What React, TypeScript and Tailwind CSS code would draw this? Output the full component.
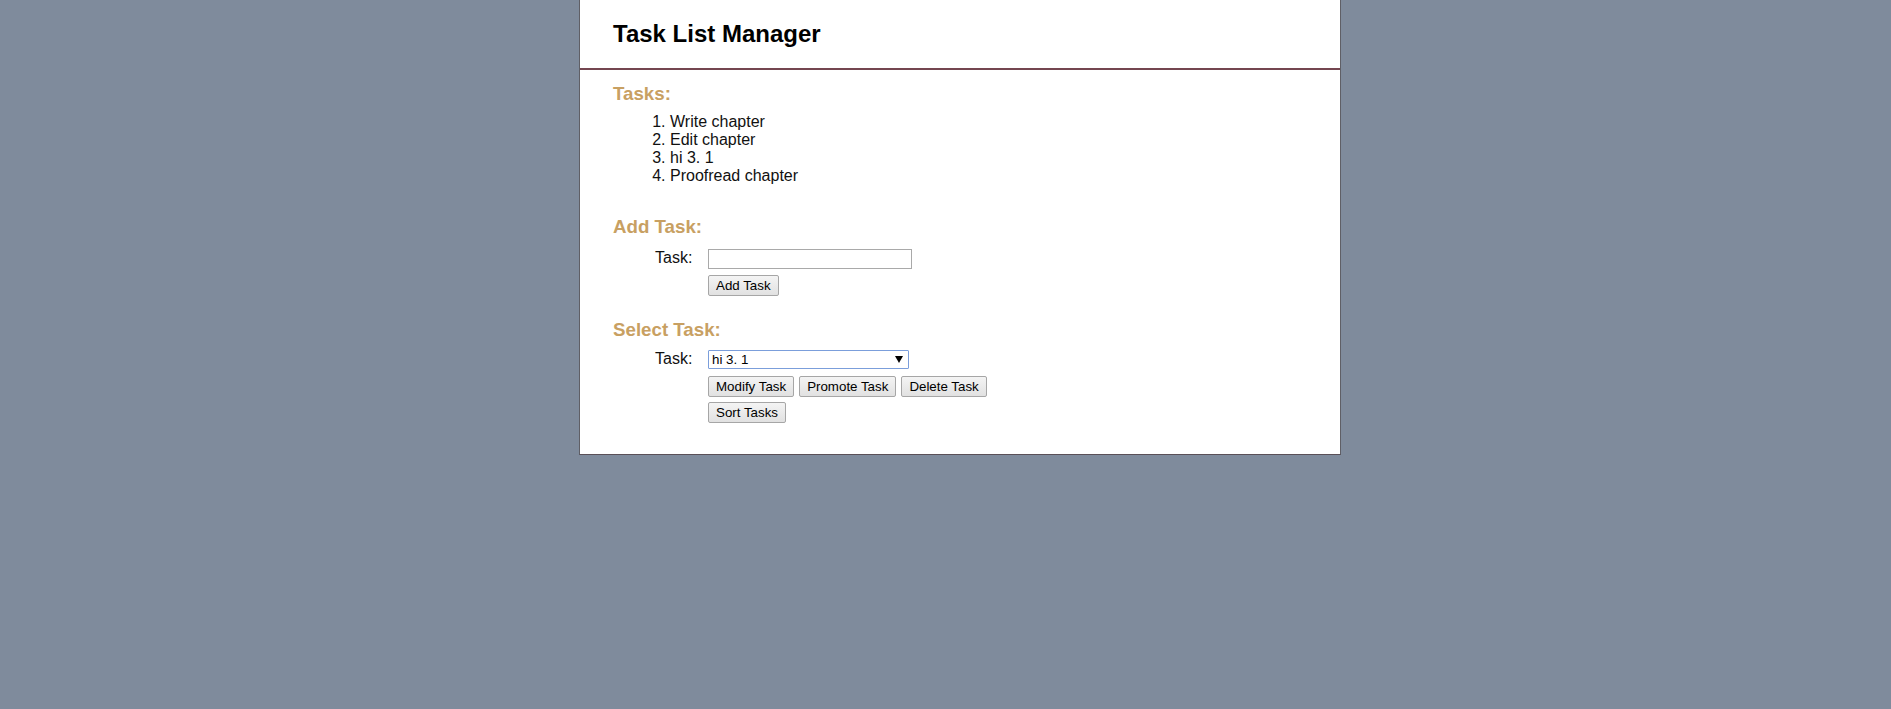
import { useState } from 'react';

const font = 'font-["Liberation_Sans",Arial,sans-serif]';

function Btn({ children }: { children: string }) {
  return (
    <button
      type="button"
      className={`${font} block h-[21px] px-[7px] text-[13.33px] leading-[19px] text-black border border-[#a6a6a6] rounded-[2px] bg-[linear-gradient(#f4f4f4,#e1e1e1)]`}
    >
      {children}
    </button>
  );
}

export default function App() {
  const [tasks] = useState(['Write chapter', 'Edit chapter', 'hi 3. 1', 'Proofread chapter']);
  const [selected, setSelected] = useState('hi 3. 1');
  const [newTask, setNewTask] = useState('');

  return (
    <div className={`${font} min-h-screen bg-[#7f8b9c]`}>
      <div className="ml-[579px] w-[762px] bg-white border-x border-b border-x-[#5f5f66] border-b-[#5a5058]">
        {/* header */}
        <div className="h-[70px] pt-[20px] pl-[33px] border-b-2 border-[#744650]">
          <h1 className="text-[24px] leading-[28px] font-bold text-black">Task List Manager</h1>
        </div>

        <div className="pl-[33px] pt-[13px] pb-[31px]">
          {/* task list */}
          <h3 className="text-[18.72px] leading-[22px] font-bold text-[#c8a062]">Tasks:</h3>
          <ol className="list-decimal pl-[57px] mt-[8px] text-[16px] leading-[18px] text-[#111]">
            {tasks.map((t) => (
              <li key={t}>{t}</li>
            ))}
          </ol>

          {/* add task */}
          <h3 className="mt-[31px] text-[18.72px] leading-[22px] font-bold text-[#c8a062]">Add Task:</h3>
          <div className="flex items-start mt-[11px]">
            <div className="ml-[42px] w-[53px] text-[16px] leading-[18px] text-[#111]">Task:</div>
            <div className="flex flex-col gap-[6px] items-start">
              <input
                type="text"
                value={newTask}
                onChange={(e) => setNewTask(e.target.value)}
                className="block w-[204px] h-[20px] border border-[#a9a9a9] px-[2px] text-[13.33px] outline-none"
              />
              <Btn>Add Task</Btn>
            </div>
          </div>

          {/* select task */}
          <h3 className="mt-[23px] text-[18.72px] leading-[22px] font-bold text-[#c8a062]">Select Task:</h3>
          <div className="flex items-start mt-[9px]">
            <div className="ml-[42px] w-[53px] text-[16px] leading-[18px] text-[#111]">Task:</div>
            <div className="flex flex-col items-start">
              <div className="relative w-[201px] h-[19px]">
                <select
                  value={selected}
                  onChange={(e) => setSelected(e.target.value)}
                  className="block appearance-none w-full h-full border border-[#7b9edb] rounded-[1px] pl-[3px] text-[13.33px] leading-[17px] text-black bg-white outline-none"
                >
                  {tasks.map((t) => (
                    <option key={t} value={t}>
                      {t}
                    </option>
                  ))}
                </select>
                <span className="pointer-events-none absolute right-[6px] top-[6px] w-0 h-0 border-x-[4px] border-x-transparent border-t-[7px] border-t-black" />
              </div>
              <div className="flex gap-[5px] mt-[7px]">
                <Btn>Modify Task</Btn>
                <Btn>Promote Task</Btn>
                <Btn>Delete Task</Btn>
              </div>
              <div className="flex mt-[5px]">
                <Btn>Sort Tasks</Btn>
              </div>
            </div>
          </div>
        </div>
      </div>
    </div>
  );
}
